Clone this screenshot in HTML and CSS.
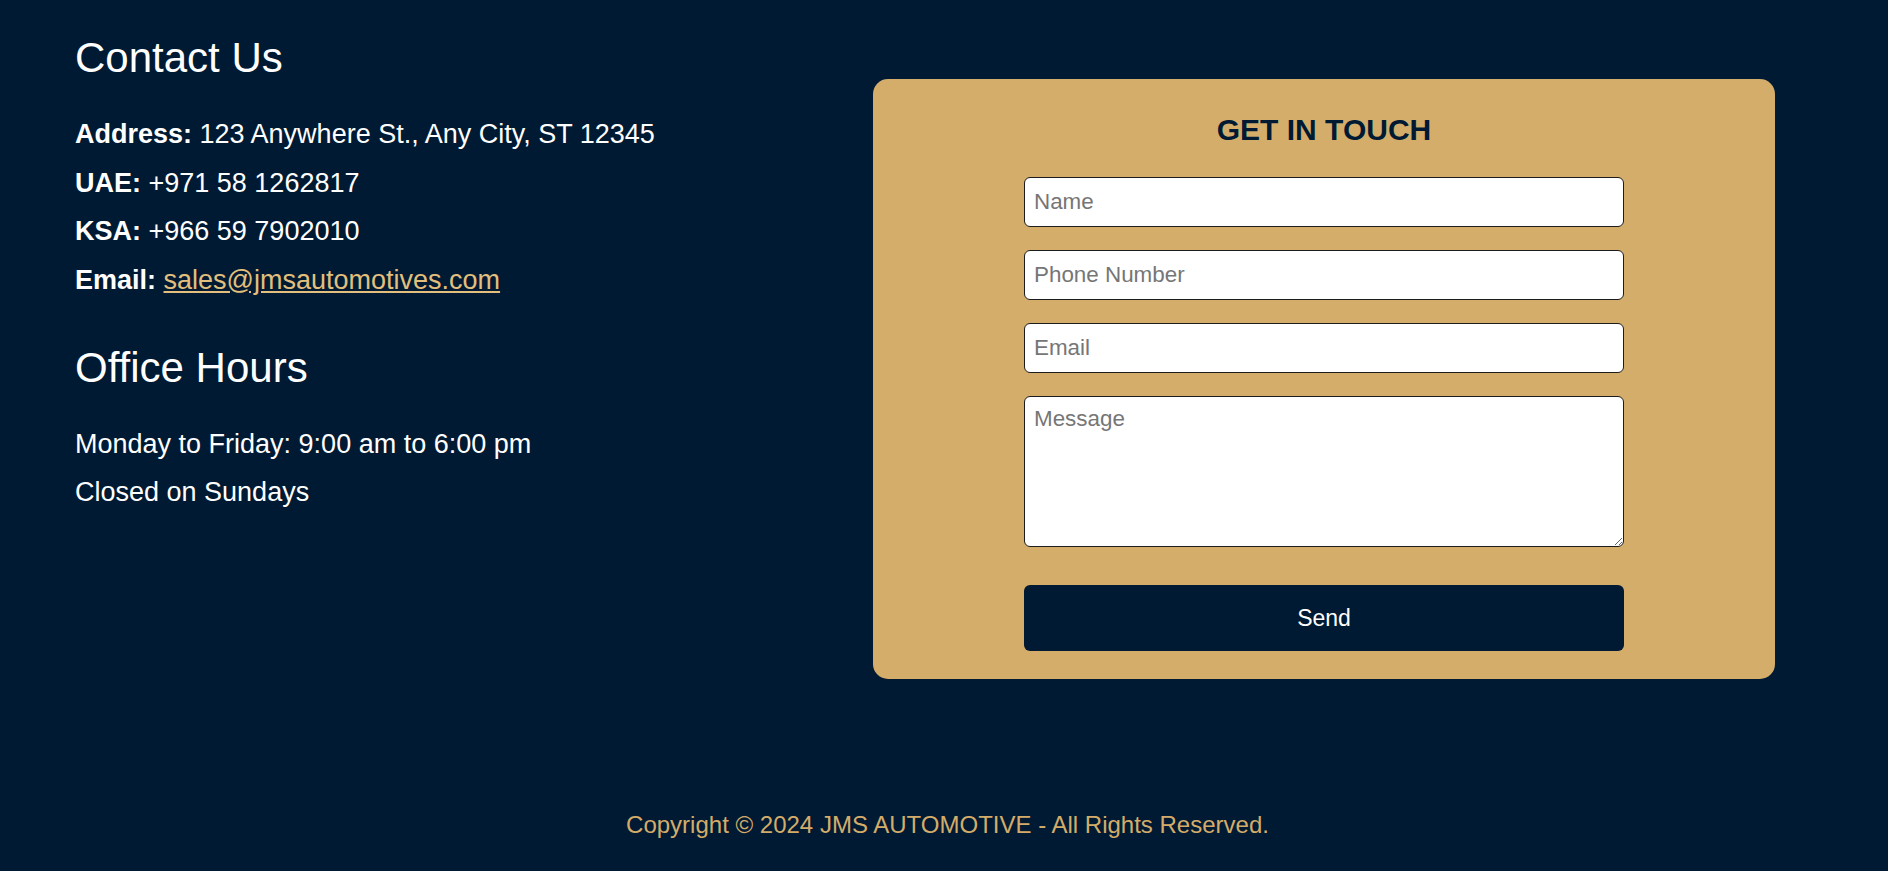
FILE: index.html
```html
<!DOCTYPE html>
<html lang="en">
<head>
<meta charset="utf-8">
<title>Contact Us - JMS Automotive</title>
<link rel="stylesheet" href="styles.css">
</head>
<body>
<main class="contact">
  <section class="info">
    <h2 class="title">Contact Us</h2>
    <p class="line"><strong>Address:</strong> 123 Anywhere St., Any City, ST 12345</p>
    <p class="line"><strong>UAE:</strong> +971 58 1262817</p>
    <p class="line"><strong>KSA:</strong> +966 59 7902010</p>
    <p class="line"><strong>Email:</strong> <a class="mail" href="#">sales@jmsautomotives.com</a></p>
    <h2 class="title hours-title">Office Hours</h2>
    <p class="line">Monday to Friday: 9:00 am to 6:00 pm</p>
    <p class="line">Closed on Sundays</p>
  </section>
  <section class="card">
    <h3 class="card-title">GET IN TOUCH</h3>
    <form class="form">
      <input class="field" type="text" placeholder="Name">
      <input class="field" type="tel" placeholder="Phone Number">
      <input class="field" type="email" placeholder="Email">
      <textarea class="field area" placeholder="Message"></textarea>
      <button class="send" type="button">Send</button>
    </form>
  </section>
</main>
<footer class="footer">
  <p class="copy">Copyright © 2024 JMS AUTOMOTIVE - All Rights Reserved.</p>
</footer>
</body>
</html>
```
FILE: styles.css
```css
html, body {
  margin: 0;
  padding: 0;
}
body {
  background: #001a33;
  color: #ffffff;
  font-family: "Liberation Sans", Arial, sans-serif;
}
.contact {
  display: grid;
  grid-template-columns: 798px 902px;
  padding-left: 75px;
  align-items: start;
}
.title {
  font-size: 42px;
  font-weight: normal;
  line-height: 48px;
  margin: 34px 0 37px;
}
.hours-title {
  margin-top: 49px;
}
.line {
  font-size: 27px;
  line-height: 30px;
  margin: 0 0 18.5px;
}
.line strong {
  font-weight: bold;
}
.mail {
  color: #e2bf7c;
  text-decoration: underline;
}
.card {
  margin-top: 79px;
  background: #d4ad6b;
  border-radius: 15px;
  padding: 34px 0 28px;
  display: flex;
  flex-direction: column;
  align-items: center;
}
.card-title {
  margin: 0 0 30px;
  font-size: 30px;
  line-height: 34px;
  font-weight: bold;
  color: #001a33;
}
.form {
  width: 600px;
  display: flex;
  flex-direction: column;
}
.field {
  box-sizing: border-box;
  width: 100%;
  height: 50px;
  margin: 0 0 23px;
  padding: 0 9px;
  border: 1px solid #1c1c1c;
  border-radius: 6px;
  background: #ffffff;
  font-family: "Liberation Sans", Arial, sans-serif;
  font-size: 22.4px;
  color: #222;
}
.field::placeholder {
  color: #767676;
}
.area {
  height: 151px;
  margin-bottom: 38px;
  padding: 9px 9px;
  resize: vertical;
}
.send {
  height: 66px;
  border: none;
  border-radius: 6px;
  background: #001a33;
  color: #ffffff;
  font-family: "Liberation Sans", Arial, sans-serif;
  font-size: 23px;
  cursor: pointer;
}
.footer {
  margin-top: 132px;
  padding-left: 7px;
  text-align: center;
}
.copy {
  margin: 0;
  font-size: 24px;
  line-height: 27.5px;
  color: #d4ac6a;
}
```
